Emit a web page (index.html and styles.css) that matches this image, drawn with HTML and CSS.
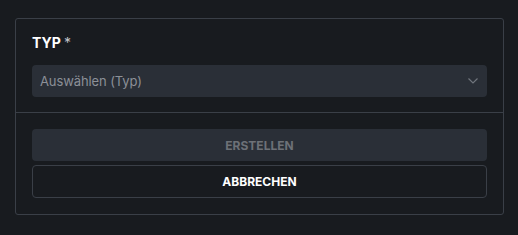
FILE: index.html
```html
<!DOCTYPE html>
<html lang="de">
<head>
    <meta charset="UTF-8">
    <meta name="viewport" content="width=device-width, initial-scale=1.0">
    <link rel="stylesheet" href="styles.css">
    <title>Typ erstellen</title>
</head>
<body>
    <div class="card">
        <div class="card-body">
            <label class="field-label" for="typ">TYP <span class="required">*</span></label>
            <div class="select" id="typ">
                <span class="select-text">Auswählen (Typ)</span>
                <svg class="chevron" width="10" height="6" viewBox="0 0 10 6">
                    <path d="M0.5 0.5 L5 5 L9.5 0.5" fill="none" stroke="#70757d" stroke-width="1.2"/>
                </svg>
            </div>
        </div>
        <div class="card-footer">
            <button class="btn btn-disabled" type="button">ERSTELLEN</button>
            <button class="btn btn-outline" type="button">ABBRECHEN</button>
        </div>
    </div>
</body>
</html>
```

FILE: styles.css
```css
body {
    margin: 0;
    padding: 18px 15px;
    background-color: #181b1f;
    font-family: Inter, "Noto Sans", sans-serif;
}
.card {
    width: 489px;
    box-sizing: border-box;
    border: 1px solid #3a3f47;
    border-radius: 3px;
}
/* oberer Bereich mit Auswahlfeld */
.card-body {
    padding: 14px 16px 15px 16px;
    border-bottom: 1px solid #3a3f47;
}
.field-label {
    display: block;
    color: #ffffff;
    font-size: 14px;
    font-weight: 700;
    line-height: 20px;
    margin-bottom: 12px;
}
.required {
    font-weight: 400;
    color: #c3c6cb;
}
.select {
    display: flex;
    align-items: center;
    justify-content: space-between;
    height: 32px;
    padding: 0 9px 0 8px;
    background-color: #2a2f37;
    border-radius: 4px;
}
.select-text {
    color: #8c9097;
    font-size: 13px;
    letter-spacing: -0.1px;
}
/* Buttons */
.card-footer {
    display: flex;
    flex-direction: column;
    gap: 4px;
    padding: 16px;
}
.btn {
    height: 32px;
    border-radius: 4px;
    font-family: Inter, "Noto Sans", sans-serif;
    font-size: 12px;
    font-weight: 700;
    cursor: pointer;
}
.btn-disabled {
    background-color: #2a2f37;
    border: none;
    color: #6d7177;
}
.btn-outline {
    height: 33px;
    background-color: transparent;
    border: 1px solid #3a3f47;
    color: #ffffff;
}
```
